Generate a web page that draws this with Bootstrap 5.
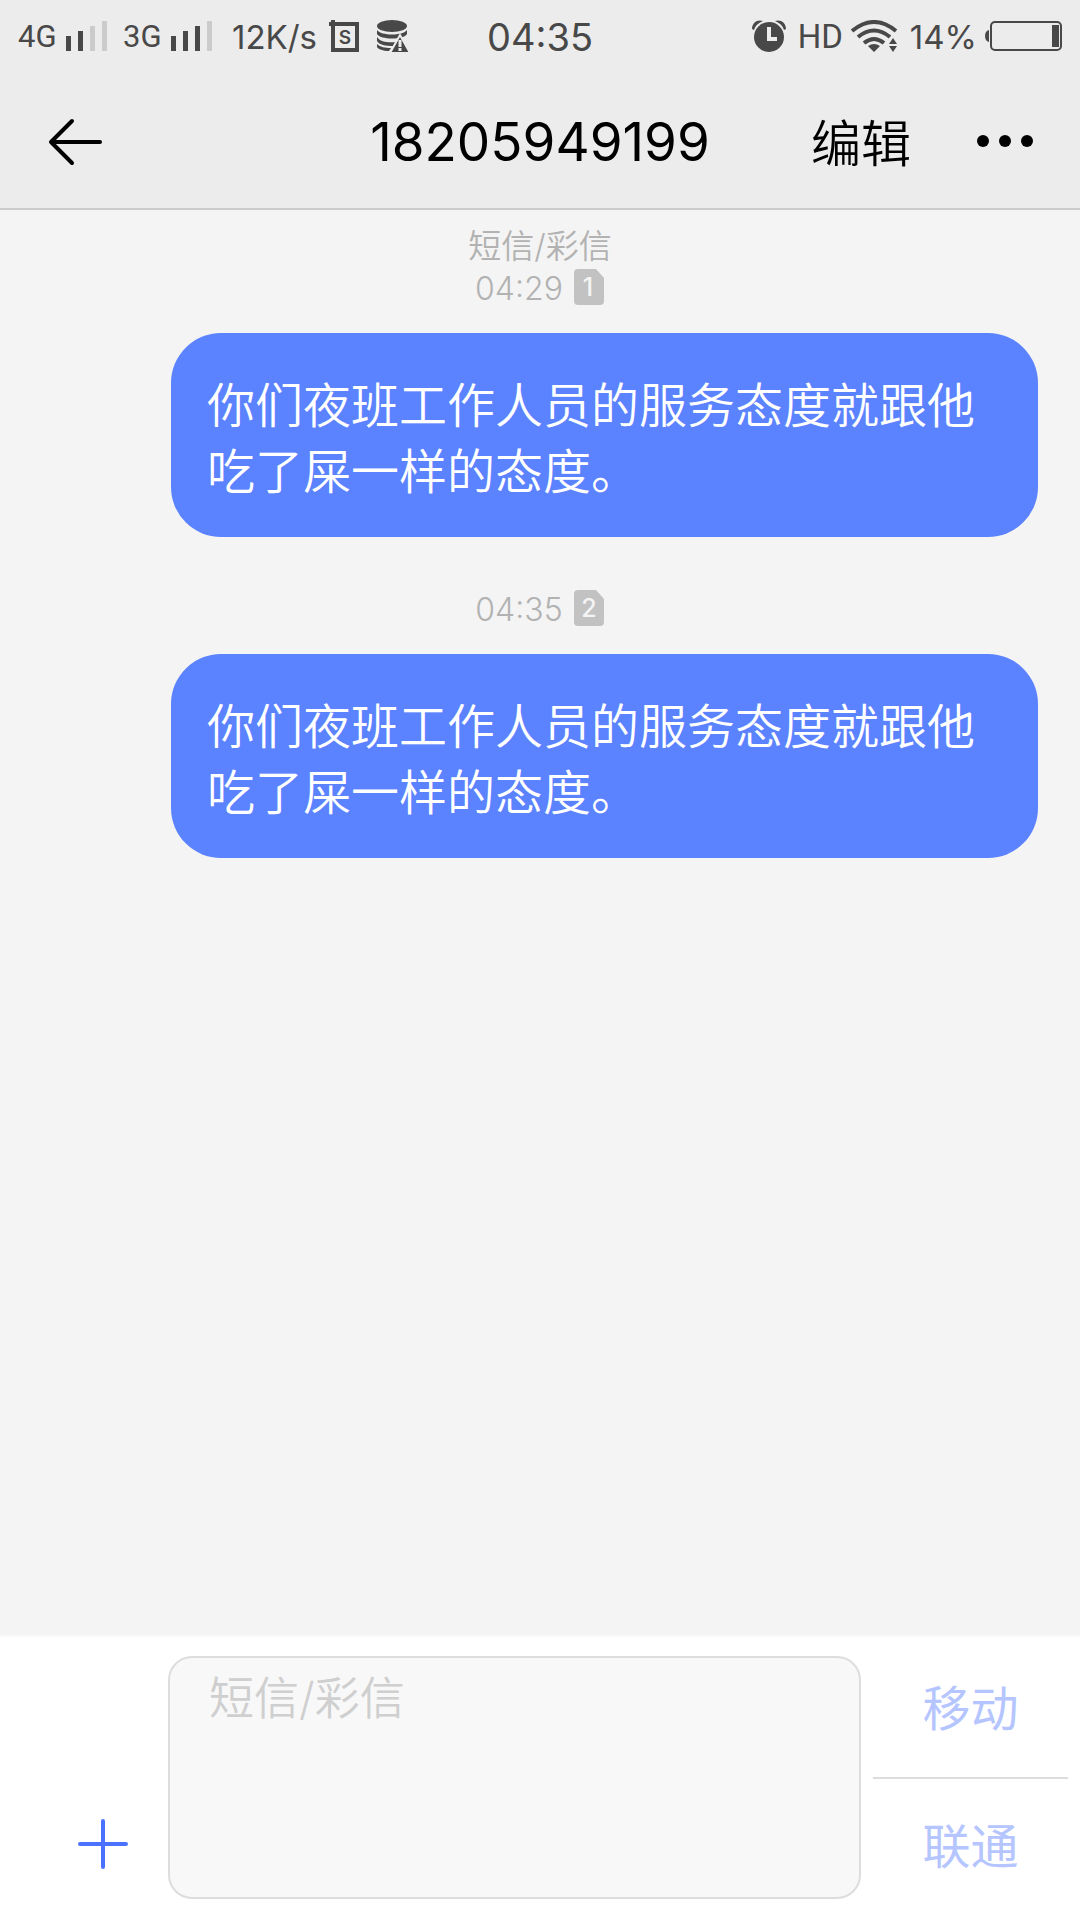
<!DOCTYPE html>
<html lang="zh-CN">
<head>
<meta charset="utf-8">
<meta name="viewport" content="width=device-width, initial-scale=1">
<title>18205949199</title>
<link rel="stylesheet" href="https://cdn.jsdelivr.net/npm/bootstrap@5.3.0/dist/css/bootstrap.min.css">
<style>
  body { font-family: Inter, "Noto Sans CJK SC", sans-serif; background: #f4f4f4; color: #000; }
  svg { display: block; flex: none; }
  .top-area { background: #ececec; border-bottom: 2px solid #ccc; }
  .status-bar { height: 74px; padding: 0 18px; color: #484848; line-height: 40px; }
  .side { flex: 1 1 0; }
  .net-label { font: 400 31px/40px Roboto, sans-serif; width: 48px; }
  .speed { font-size: 33px; }
  .clock { font-size: 38px; }
  .hd-label { font: 400 33px/40px Roboto, sans-serif; }
  .title-bar { height: 134px; padding: 2px 40px 0; }
  .title-text { font-size: 53px; line-height: 64px; }
  .edit-btn { font-size: 50px; line-height: 64px; font-weight: 350; }
  .plain { border: 0; background: none; padding: 0; color: inherit; }
  .plain.edit-btn { padding-top: 4px; }
  .thread { padding: 16px 42px 0; }
  .stamp { color: #b2b2b2; font-size: 33px; line-height: 40px; font-weight: 350; }
  .time-row { height: 42px; gap: 11px; }
  .time-row time { font-size: 32px; font-weight: 300; padding-top: 4px; }
  .msg { margin-bottom: 50px; }
  .bubble { width: 867px; max-width: 100%; background: #5b82ff; color: #fff; border-radius: 50px; padding: 40px 36px 32px;
            font-size: 48px; line-height: 66px; font-weight: 350; margin-top: 25px; }
  .composer { background: #fff; border-top: 2px solid #f9f9f9; padding: 19px 12px 21px 0; }
  .add-col { width: 168px; padding: 0 39px 29px 77px; }
  .composer textarea { flex: 1 1 0; min-width: 0; height: 243px; border: 2px solid #ddd; border-radius: 24px; background: #f8f8f8;
                       padding: 8px 39px; font-size: 45px; line-height: 66px; resize: none; font-weight: 350; }
  .composer textarea::placeholder { color: #cfcfcf; opacity: 1; }
  .sims { width: 195px; margin-left: 12px; }
  .sims button { height: 120px; color: #b5c5ff; font-size: 48px; line-height: 64px; }
  .sims button:first-child { height: 123px; padding-bottom: 16px; border-bottom: 2px solid #ddd; }
  .sims button:last-child { padding-top: 16px; }
</style>
<script src="https://cdn.jsdelivr.net/npm/bootstrap@5.3.0/dist/js/bootstrap.bundle.min.js"></script>
</head>
<body class="d-flex flex-column min-vh-100">

<header class="top-area">
  <div class="status-bar d-flex align-items-center">
    <div class="side d-flex align-items-center">
      <span class="net-label">4G</span>
      <svg width="41" height="32" viewBox="0 0 41 32" aria-hidden="true"><path fill="#484848" d="M0 15h5v15H0zM12 10h5v20h-5z"/><path fill="#cbcbcb" d="M24 5h5v25h-5zM36 0h5v30h-5z"/></svg>
      <span class="net-label ms-3">3G</span>
      <svg width="41" height="32" viewBox="0 0 41 32" aria-hidden="true"><path fill="#484848" d="M0 15h5v15H0zM12 10h5v20h-5zM24 5h5v25h-5z"/><path fill="#cbcbcb" d="M36 0h5v30h-5z"/></svg>
      <span class="speed ms-3 ps-1 pe-1">12K/s</span>
      <svg class="ms-2" width="30" height="34" viewBox="0 0 30 34" aria-hidden="true"><path fill="#484848" fill-rule="evenodd" d="M2 0h4v2h24v30H2V6H0V2h2zM6 6v22h20V6z"/><text x="16" y="24" text-anchor="middle" font-family="Inter, sans-serif" font-weight="600" font-size="19" fill="#484848">S</text></svg>
      <svg class="ms-3" width="34" height="34" viewBox="-1 0 34 34" aria-hidden="true"><g fill="#484848"><ellipse cx="16" cy="6" rx="15" ry="6"/><path d="M1 10c4 6 26 6 30 0v4c-3 6-27 6-30 0z"/><path d="M1 17c3 5 12 6 19 5l-3 4C10 26 3 25 1 21zM1 24c3 3 8 4 14 4l-2 3C7 31 2 29 1 27z"/></g><path fill="#484848" stroke="#ececec" stroke-width="2" d="M24 15 34 33H14z"/><path stroke="#ececec" stroke-width="3" d="M24 20v7M24 28v3"/></svg>
    </div>
    <span class="clock">04:35</span>
    <div class="side d-flex align-items-center justify-content-end">
      <svg width="34" height="34" viewBox="0 0 34 34" aria-hidden="true"><circle cx="17" cy="17" r="15" fill="#484848"/><path fill="#484848" d="M0 9C0 2 6-1 11 1 6 3 3 6 2 10zM34 9C34 2 28-1 23 1c5 2 8 5 9 9z"/><path d="M17 7v12h8" fill="none" stroke="#ececec" stroke-width="4"/></svg>
      <span class="hd-label ms-2 ps-1">HD</span>
      <svg class="ms-2" width="47" height="34" viewBox="0 0 47 34" aria-hidden="true"><g fill="none" stroke="#484848" stroke-width="4"><path d="M1 11q22-18 44 0M7 17q16-13 32 0M13 23q10-8 20 0"/></g><path fill="#484848" d="M17 26q6-4 12 0l-6 6zM38 24l4-6 4 6zM38 26h8l-4 6z"/></svg>
      <span class="speed ms-2 ps-1">14%</span>
      <svg class="ms-2" width="77" height="32" viewBox="0 0 77 32" aria-hidden="true"><rect x="6" y="1" width="70" height="28" rx="4" fill="none" stroke="#484848" stroke-width="2"/><path fill="#484848" d="M67 4h7v22h-7zM4 9v12q-4-1-4-6t4-6"/></svg>
    </div>
  </div>
  <nav class="title-bar d-flex align-items-center" aria-label="会话">
    <div class="side"><button class="plain ps-2 d-block" type="button" aria-label="返回"><svg width="56" height="50" viewBox="0 0 56 50"><path d="M24 4 3 25l21 21M3 25h49" fill="none" stroke="#000" stroke-width="4" stroke-linecap="round" stroke-linejoin="round"/></svg></button></div>
    <h1 class="title-text fw-normal m-0">18205949199</h1>
    <div class="side d-flex align-items-center justify-content-end">
      <button class="edit-btn plain" type="button">编辑</button>
      <button class="plain ms-5 ps-3" type="button" aria-label="更多"><svg width="65" height="14" viewBox="0 0 65 14"><g><circle cx="8" cy="6" r="6"/><circle cx="30" cy="6" r="6"/><circle cx="52" cy="6" r="6"/></g></svg></button>
    </div>
  </nav>
</header>

<main class="thread flex-grow-1">
  <div class="stamp text-center">短信/彩信</div>
  <article class="msg">
    <div class="stamp time-row d-flex justify-content-center align-items-center"><time>04:29</time>
      <svg width="31" height="36" viewBox="0 0 31 36" role="img" aria-label="卡1"><path fill="#c2c2c2" d="M4 0h18l8 9v23q0 4-4 4H4q-4 0-4-4V4q0-4 4-4"/><text x="14" y="27" text-anchor="middle" font-size="25" font-weight="500" fill="#f4f4f4">1</text></svg></div>
    <p class="bubble ms-auto mb-0">你们夜班工作人员的服务态度就跟他吃了屎一样的态度。</p>
  </article>
  <article class="msg">
    <div class="stamp time-row d-flex justify-content-center align-items-center"><time>04:35</time>
      <svg width="31" height="36" viewBox="0 0 31 36" role="img" aria-label="卡2"><path fill="#c2c2c2" d="M4 0h18l8 9v23q0 4-4 4H4q-4 0-4-4V4q0-4 4-4"/><text x="15" y="27" text-anchor="middle" font-size="25" font-weight="500" fill="#f4f4f4">2</text></svg></div>
    <p class="bubble ms-auto mb-0">你们夜班工作人员的服务态度就跟他吃了屎一样的态度。</p>
  </article>
</main>

<form class="composer d-flex">
  <div class="add-col d-flex align-items-end"><button class="plain" type="button" aria-label="添加"><svg width="52" height="52" viewBox="0 0 52 52"><path d="M26 3v46M3 26h46" stroke="#4a72ff" stroke-width="4" stroke-linecap="round"/></svg></button></div>
  <textarea aria-label="短信/彩信" placeholder="短信/彩信"></textarea>
  <div class="sims d-flex flex-column">
    <button class="plain" type="button">移动</button>
    <button class="plain" type="button">联通</button>
  </div>
</form>
</body>
</html>
